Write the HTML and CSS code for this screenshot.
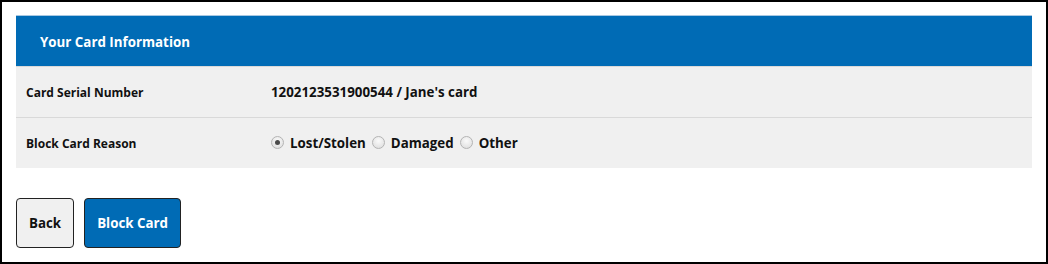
FILE: index.html
```html
<!DOCTYPE html>
<html lang="en">
<head>
  <meta charset="UTF-8" />
  <title>Block Card</title>
  <link rel="stylesheet" href="styles.css">
</head>
<body>
  <div class="frame">
    <div class="panel">
      <div class="panel-head">Your Card Information</div>
      <div class="row">
        <div class="label">Card Serial Number</div>
        <div class="value">1202123531900544 / Jane's card</div>
      </div>
      <div class="row">
        <div class="label">Block Card Reason</div>
        <div class="value options">
          <label class="option"><input type="radio" name="reason" checked /> Lost/Stolen</label>
          <label class="option"><input type="radio" name="reason" /> Damaged</label>
          <label class="option"><input type="radio" name="reason" /> Other</label>
        </div>
      </div>
    </div>

    <div class="actions">
      <button class="btn">Back</button>
      <button class="btn btn-primary">Block Card</button>
    </div>
  </div>
</body>
</html>
```

FILE: styles.css
```css
:root {
  --blue: #006bb5;
  --row-bg: #f0f0f0;
  --line: #d9d9d9;
  --text: #111;
}

html, body {
  margin: 0;
  height: 100%;
}

body {
  font-family: "Open Sans", "Liberation Sans", sans-serif;
  color: var(--text);
  background: #fff;
}

.frame {
  box-sizing: border-box;
  width: 1048px;
  height: 264px;
  border: 2px solid #000;
  padding: 13px 14px 0 14px;
}

.panel-head {
  background: var(--blue);
  border-top: 1px solid #a8c8e2;
  color: #fff;
  font-size: 13.33px;
  font-weight: 700;
  height: 50px;
  line-height: 52px;
  padding-left: 24px;
}

.row {
  display: flex;
  align-items: center;
  height: 50px;
  background: var(--row-bg);
  border-top: 1px solid var(--line);
}

.label {
  width: 245px;
  padding-left: 10px;
  font-size: 12px;
  font-weight: 700;
}

.value {
  font-size: 13.33px;
  font-weight: 700;
}

.options {
  display: flex;
  align-items: center;
}

.option {
  display: flex;
  align-items: center;
  margin-right: 6px;
}

.option input {
  appearance: none;
  -webkit-appearance: none;
  width: 13px;
  height: 13px;
  margin: 0 6px 1px 0;
  border: 1px solid #b4b4b4;
  border-radius: 50%;
  background: radial-gradient(circle at 50% 35%, #fafafa 0%, #e4e4e4 70%, #d6d6d6 100%);
  position: relative;
}

.option input:checked::after {
  content: "";
  position: absolute;
  left: 3px;
  top: 3px;
  width: 5px;
  height: 5px;
  border-radius: 50%;
  background: #4a4a4a;
}

.actions {
  display: flex;
  gap: 10px;
  margin-top: 30px;
}

.btn {
  height: 50px;
  padding: 0 12px;
  border: 1px solid #222;
  border-radius: 4px;
  background: var(--row-bg);
  color: #111;
  font-family: inherit;
  font-size: 13.33px;
  font-weight: 700;
  cursor: pointer;
}

.btn-primary {
  background: var(--blue);
  color: #fff;
}
```
